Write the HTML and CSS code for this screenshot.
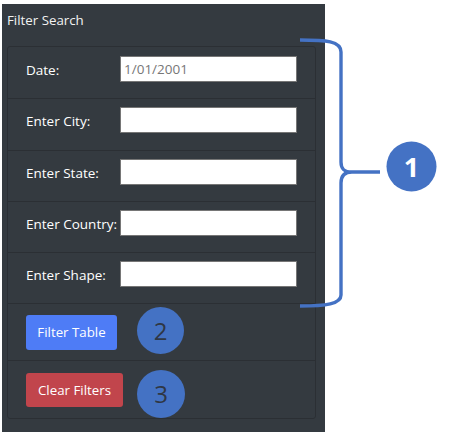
FILE: index.html
```html
<!DOCTYPE html>
<html>
<head>
<meta charset="utf-8">
<link rel="stylesheet" href="styles.css">
</head>
<body>
<div class="page">
  <div class="panel">
    <div class="title">Filter Search</div>
    <div class="card">
      <div class="row"><label class="label">Date:</label><input class="field" placeholder="1/01/2001"></div>
      <div class="row"><label class="label">Enter City:</label><input class="field"></div>
      <div class="row"><label class="label">Enter State:</label><input class="field"></div>
      <div class="row"><label class="label">Enter Country:</label><input class="field"></div>
      <div class="row"><label class="label">Enter Shape:</label><input class="field"></div>
      <div class="row btn-row"><button class="btn btn-blue">Filter Table</button><span class="marker marker-2">2</span></div>
      <div class="row btn-row last"><button class="btn btn-red">Clear Filters</button><span class="marker marker-3">3</span></div>
    </div>
  </div>
  <svg class="overlay" width="467" height="432" viewBox="0 0 467 432">
    <path d="M300 40 C326 40 341 41 341 52 L341 162 C341 169 344 172 352 172 L380 172 M352 172 C344 172 341 176 341 183 L341 295 C341 304 326 306 300 306" fill="none" stroke="#4472c4" stroke-width="3.4" stroke-linecap="butt" stroke-linejoin="round"/>
    <circle cx="411.5" cy="166.5" r="25" fill="#4472c4"/>
  </svg>
  <span class="marker-1">1</span>
</div>
</body>
</html>
```
FILE: styles.css
```css
html, body {
  margin: 0;
  padding: 0;
  background: #ffffff;
}
.page {
  position: relative;
  width: 467px;
  height: 432px;
  font-family: "Open Sans", "Noto Sans", sans-serif;
}
.panel {
  position: relative;
  margin-left: 2px;
  top: 4px;
  width: 323px;
  background: #343a40;
  padding: 0 9px 13px 5px;
  box-sizing: border-box;
}
.title {
  color: #f2f2f2;
  font-size: 13.3px;
  height: 42px;
  line-height: 33px;
}
.card {
  border: 1px solid #2b2f34;
  border-radius: 3px;
  padding-top: 1px;
}
.row {
  display: flex;
  align-items: flex-start;
  height: 51.25px;
  box-sizing: border-box;
  padding: 8px 0 0 18px;
  border-bottom: 1px solid #2b2f34;
}
.row.last {
  border-bottom: none;
}
.label {
  width: 94px;
  flex: none;
  color: #ffffff;
  font-size: 13.5px;
  line-height: 26px;
  padding-top: 1px;
  white-space: nowrap;
}
.field {
  width: 177px;
  height: 26px;
  box-sizing: border-box;
  border: 1px solid #767676;
  border-radius: 0;
  margin: 0;
  padding: 0 3px;
  font-family: "Open Sans", sans-serif;
  font-size: 13.5px;
  background: #fff;
}
.field::placeholder {
  color: #777;
}
.btn-row {
  align-items: center;
  padding: 0 0 0 18px;
  height: 57px;
}
.btn {
  border: none;
  border-radius: 3px;
  color: #fff;
  font-family: "Open Sans", sans-serif;
  font-size: 13.3px;
  height: 35px;
  padding: 0 10px;
}
.btn-blue {
  background: #4e7cf6;
  width: 91px;
}
.btn-red {
  background: #c1454c;
  width: 97px;
  height: 34px;
}
.marker {
  width: 47px;
  height: 47px;
  border-radius: 50%;
  background: #4472c4;
  color: #2f3744;
  font-family: "Open Sans", sans-serif;
  font-size: 24px;
  display: flex;
  align-items: center;
  justify-content: center;
  margin-left: 20px;
  flex: none;
}
.marker-2 {
  margin-top: -3px;
}
.marker-3 {
  width: 48px;
  height: 48px;
  margin-left: 14px;
  margin-top: 8px;
}
.overlay {
  position: absolute;
  left: 0;
  top: 0;
}
.marker-1 {
  position: absolute;
  left: 386px;
  top: 141px;
  width: 51px;
  height: 51px;
  display: flex;
  align-items: center;
  justify-content: center;
  color: #ffffff;
  font-family: "Open Sans", sans-serif;
  font-weight: 700;
  font-size: 27px;
}
```
